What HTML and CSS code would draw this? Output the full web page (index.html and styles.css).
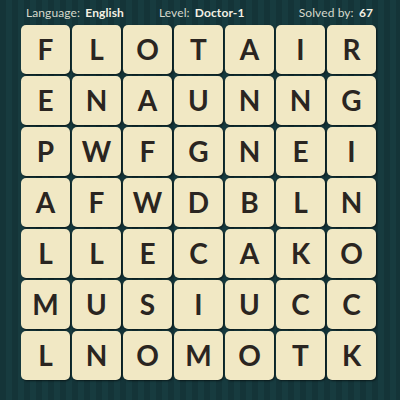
FILE: index.html
```html
<!DOCTYPE html>
<html>
<head>
<meta charset="utf-8">
<link rel="stylesheet" href="styles.css">
</head>
<body>
<div class="page">
  <div class="header">
    <span class="item item-lang">Language: <b>English</b></span>
    <span class="item item-level">Level: <b>Doctor-1</b></span>
    <span class="item item-solved">Solved by: <b>67</b></span>
  </div>
  <div class="grid">
    <div class="tile">F</div><div class="tile">L</div><div class="tile">O</div><div class="tile">T</div><div class="tile">A</div><div class="tile">I</div><div class="tile">R</div>
    <div class="tile">E</div><div class="tile">N</div><div class="tile">A</div><div class="tile">U</div><div class="tile">N</div><div class="tile">N</div><div class="tile">G</div>
    <div class="tile">P</div><div class="tile">W</div><div class="tile">F</div><div class="tile">G</div><div class="tile">N</div><div class="tile">E</div><div class="tile">I</div>
    <div class="tile">A</div><div class="tile">F</div><div class="tile">W</div><div class="tile">D</div><div class="tile">B</div><div class="tile">L</div><div class="tile">N</div>
    <div class="tile">L</div><div class="tile">L</div><div class="tile">E</div><div class="tile">C</div><div class="tile">A</div><div class="tile">K</div><div class="tile">O</div>
    <div class="tile">M</div><div class="tile">U</div><div class="tile">S</div><div class="tile">I</div><div class="tile">U</div><div class="tile">C</div><div class="tile">C</div>
    <div class="tile">L</div><div class="tile">N</div><div class="tile">O</div><div class="tile">M</div><div class="tile">O</div><div class="tile">T</div><div class="tile">K</div>
  </div>
</div>
</body>
</html>
```
FILE: styles.css
```css
html, body {
  margin: 0;
  padding: 0;
}
body {
  width: 400px;
  height: 400px;
  overflow: hidden;
  background-color: #16373b;
  background-image: repeating-linear-gradient(90deg, #143438 0, #143438 6px, #173b3f 6px, #173b3f 12px);
  font-family: Lato, "Liberation Sans", sans-serif;
}
.page {
  width: 400px;
  height: 400px;
  display: flex;
  flex-direction: column;
}
.header {
  height: 25px;
  display: flex;
  align-items: center;
  padding-left: 26px;
  color: #d6d9cc;
  font-size: 12px;
  letter-spacing: 0.1px;
}
.header b {
  color: #f3f1e4;
  font-weight: 700;
  margin-left: 2px;
}
.item-level {
  margin-left: 35px;
}
.item-solved {
  margin-left: auto;
  margin-right: 27px;
}
.grid {
  margin-left: 21px;
  display: grid;
  grid-template-columns: repeat(7, 49px);
  grid-auto-rows: 49px;
  gap: 2px;
}
.tile {
  background: #f1e8c4;
  border-radius: 5px;
  box-shadow: 1px 1px 2px rgba(0, 0, 0, 0.55);
  display: flex;
  align-items: center;
  justify-content: center;
  color: #2a2521;
  font-size: 28px;
  font-weight: 700;
  padding-bottom: 1px;
  box-sizing: border-box;
}
```
